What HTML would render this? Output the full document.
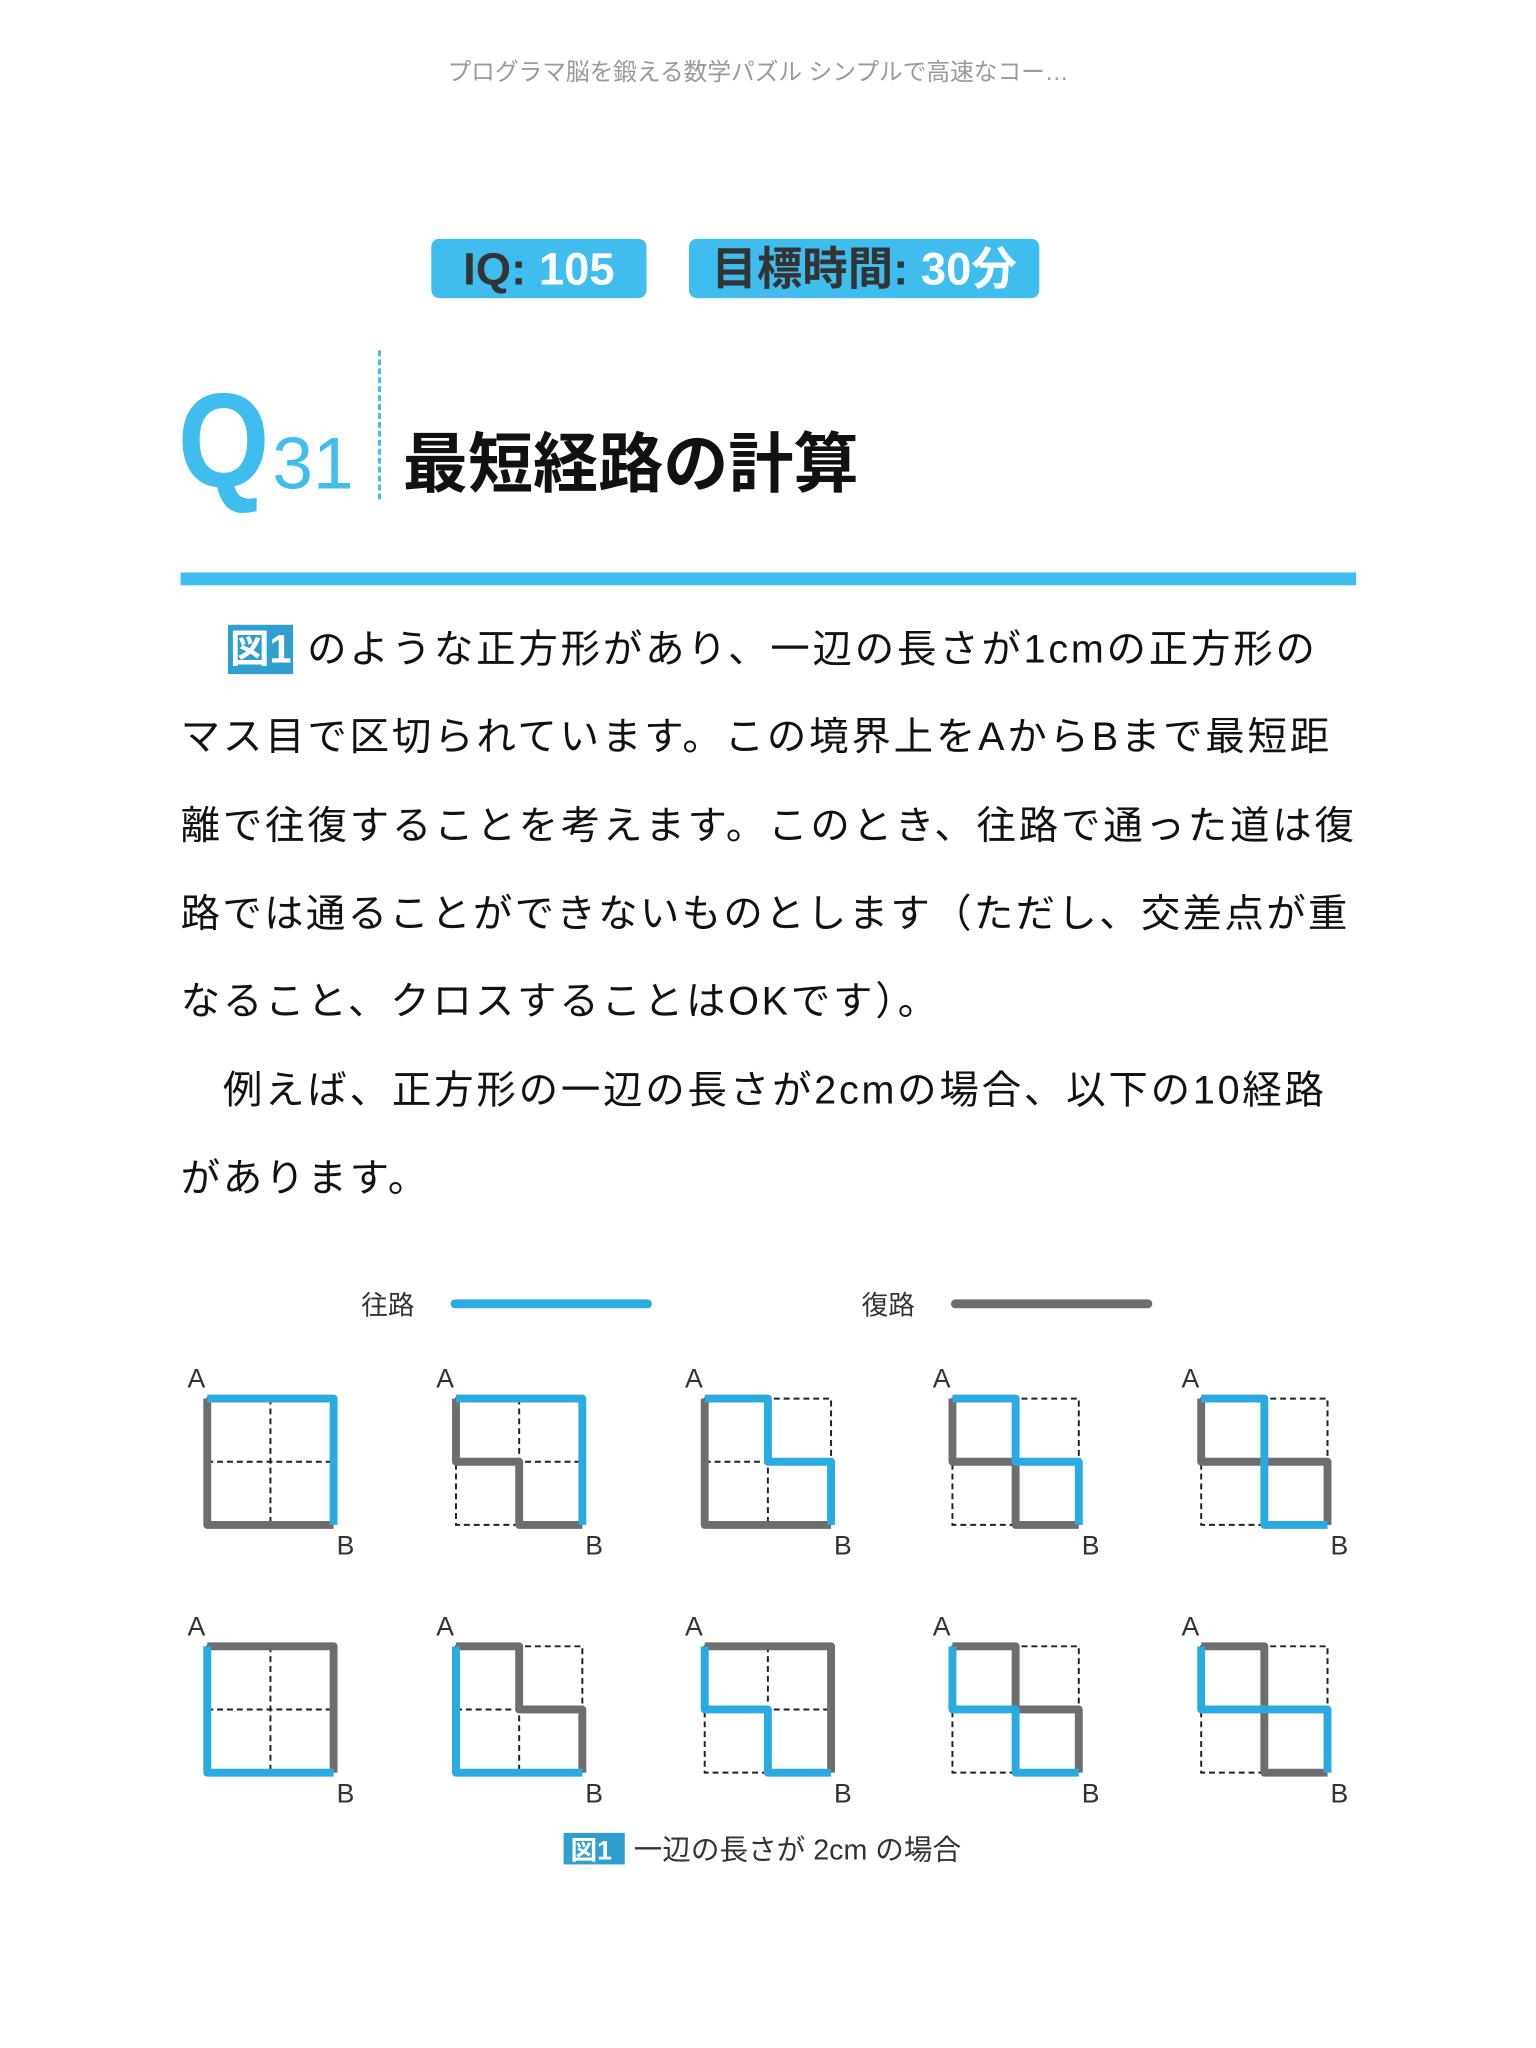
<!DOCTYPE html>
<html><head><meta charset="utf-8">
<style>
html,body{margin:0;padding:0;background:#fff;}
body{width:1536px;height:2048px;position:relative;overflow:hidden;font-family:"Liberation Sans","Noto Sans CJK JP",sans-serif;}
#w{position:absolute;left:0;top:0;width:1536px;height:2048px;transform:scale(0.987);transform-origin:0 0;}
.a{position:absolute;white-space:nowrap;}
.hdr{left:0;width:1536px;text-align:center;top:53px;font-size:24px;color:#9a9a9a;}
.badge{background:#3fbdee;border-radius:8px;height:60px;top:242px;font-size:46px;font-weight:bold;line-height:60px;text-align:center;}
.dk{color:#333;} .wh{color:#fff;}
.line{left:183px;font-size:40px;color:#111;letter-spacing:2.8px;line-height:50px;}
.fig{display:inline-block;background:#2f9fcf;color:#fff;font-weight:bold;}
</style></head><body><div id="w">
<div class="a hdr">プログラマ脳を鍛える数学パズル シンプルで高速なコー…</div>
<div class="a badge" style="left:437px;width:218px;"><span class="dk">IQ: </span><span class="wh">105</span></div>
<div class="a badge" style="left:698px;width:355px;"><span class="dk">目標時間: </span><span class="wh">30分</span></div>
<div class="a" style="left:383px;top:355px;height:151px;border-left:3px dashed #3fbdee;"></div>
<div class="a" style="left:180px;top:376px;font-size:136px;font-weight:bold;color:#3fbdee;line-height:140px;transform:scaleX(0.88);transform-origin:0 0;">Q</div>
<div class="a" style="left:276px;top:430px;font-size:74px;color:#3fbdee;line-height:80px;">31</div>
<div class="a" style="left:408px;top:432px;font-size:66px;font-weight:bold;color:#111;line-height:76px;">最短経路の計算</div>
<div class="a" style="left:183px;top:580px;width:1191px;height:13px;background:#3fbdee;"></div>

<div class="a line" style="top:633px;"><span style="display:inline-block;width:48px"></span><span class="fig" style="padding:0 2px;letter-spacing:0;">図1</span> のような正方形があり、一辺の長さが1cmの正方形の</div>
<div class="a line" style="top:722px;">マス目で区切られています。この境界上をAからBまで最短距</div>
<div class="a line" style="top:812px;">離で往復することを考えます。このとき、往路で通った道は復</div>
<div class="a line" style="top:901px;letter-spacing:2.3px;">路では通ることができないものとします（ただし、交差点が重</div>
<div class="a line" style="top:990px;">なること、クロスすることはOKです）。</div>
<div class="a line" style="top:1080px;">　例えば、正方形の一辺の長さが2cmの場合、以下の10経路</div>
<div class="a line" style="top:1169px;">があります。</div>

<svg class="a" style="left:0;top:1280px" width="1536" height="650" viewBox="0 1280 1536 650">
<g font-family="Liberation Sans,Noto Sans CJK JP,sans-serif" fill="#333">
<text x="366" y="1332" font-size="27">往路</text>
<text x="873" y="1332" font-size="27">復路</text>
</g>
<line x1="461" y1="1321" x2="656" y2="1321" stroke="#29abe2" stroke-width="9" stroke-linecap="round"/>
<line x1="968" y1="1321" x2="1163" y2="1321" stroke="#6d6d6d" stroke-width="9" stroke-linecap="round"/>
<defs>
<g id="grid" fill="none" stroke="#222" stroke-width="2" stroke-dasharray="6,4">
<rect x="0" y="0" width="128" height="128"/>
<line x1="64" y1="0" x2="64" y2="128"/>
<line x1="0" y1="64" x2="128" y2="64"/>
</g>
</defs>
<g font-family="Liberation Sans,sans-serif" font-size="27" fill="#333">
<g transform="translate(210,1417)"><use href="#grid"/>
<path d="M0 0V128H128" fill="none" stroke="#6d6d6d" stroke-width="8" stroke-linejoin="round"/>
<path d="M0 0H128V128" fill="none" stroke="#29abe2" stroke-width="8" stroke-linejoin="round"/>
<text x="-20" y="-11">A</text><text x="131" y="158">B</text></g>
<g transform="translate(462,1417)"><use href="#grid"/>
<path d="M0 0V64H64V128H128" fill="none" stroke="#6d6d6d" stroke-width="8" stroke-linejoin="round"/>
<path d="M0 0H128V128" fill="none" stroke="#29abe2" stroke-width="8" stroke-linejoin="round"/>
<text x="-20" y="-11">A</text><text x="131" y="158">B</text></g>
<g transform="translate(714,1417)"><use href="#grid"/>
<path d="M0 0V128H128" fill="none" stroke="#6d6d6d" stroke-width="8" stroke-linejoin="round"/>
<path d="M0 0H64V64H128V128" fill="none" stroke="#29abe2" stroke-width="8" stroke-linejoin="round"/>
<text x="-20" y="-11">A</text><text x="131" y="158">B</text></g>
<g transform="translate(965,1417)"><use href="#grid"/>
<path d="M0 0V64H64V128H128" fill="none" stroke="#6d6d6d" stroke-width="8" stroke-linejoin="round"/>
<path d="M0 0H64V64H128V128" fill="none" stroke="#29abe2" stroke-width="8" stroke-linejoin="round"/>
<text x="-20" y="-11">A</text><text x="131" y="158">B</text></g>
<g transform="translate(1217,1417)"><use href="#grid"/>
<path d="M0 0V64H128V128" fill="none" stroke="#6d6d6d" stroke-width="8" stroke-linejoin="round"/>
<path d="M0 0H64V128H128" fill="none" stroke="#29abe2" stroke-width="8" stroke-linejoin="round"/>
<text x="-20" y="-11">A</text><text x="131" y="158">B</text></g>
<g transform="translate(210,1668)"><use href="#grid"/>
<path d="M0 0H128V128" fill="none" stroke="#6d6d6d" stroke-width="8" stroke-linejoin="round"/>
<path d="M0 0V128H128" fill="none" stroke="#29abe2" stroke-width="8" stroke-linejoin="round"/>
<text x="-20" y="-11">A</text><text x="131" y="158">B</text></g>
<g transform="translate(462,1668)"><use href="#grid"/>
<path d="M0 0H64V64H128V128" fill="none" stroke="#6d6d6d" stroke-width="8" stroke-linejoin="round"/>
<path d="M0 0V128H128" fill="none" stroke="#29abe2" stroke-width="8" stroke-linejoin="round"/>
<text x="-20" y="-11">A</text><text x="131" y="158">B</text></g>
<g transform="translate(714,1668)"><use href="#grid"/>
<path d="M0 0H128V128" fill="none" stroke="#6d6d6d" stroke-width="8" stroke-linejoin="round"/>
<path d="M0 0V64H64V128H128" fill="none" stroke="#29abe2" stroke-width="8" stroke-linejoin="round"/>
<text x="-20" y="-11">A</text><text x="131" y="158">B</text></g>
<g transform="translate(965,1668)"><use href="#grid"/>
<path d="M0 0H64V64H128V128" fill="none" stroke="#6d6d6d" stroke-width="8" stroke-linejoin="round"/>
<path d="M0 0V64H64V128H128" fill="none" stroke="#29abe2" stroke-width="8" stroke-linejoin="round"/>
<text x="-20" y="-11">A</text><text x="131" y="158">B</text></g>
<g transform="translate(1217,1668)"><use href="#grid"/>
<path d="M0 0H64V128H128" fill="none" stroke="#6d6d6d" stroke-width="8" stroke-linejoin="round"/>
<path d="M0 0V64H128V128" fill="none" stroke="#29abe2" stroke-width="8" stroke-linejoin="round"/>
<text x="-20" y="-11">A</text><text x="131" y="158">B</text></g>
</g>
<rect x="571" y="1857" width="62" height="32" fill="#2f9fcf"/>
<text x="578" y="1884" font-size="27" font-weight="bold" fill="#fff" font-family="Liberation Sans,Noto Sans CJK JP,sans-serif">図1</text>
<text x="642" y="1884" font-size="29" fill="#333" font-family="Liberation Sans,Noto Sans CJK JP,sans-serif">一辺の長さが 2cm の場合</text>
</svg>
</div></body></html>
